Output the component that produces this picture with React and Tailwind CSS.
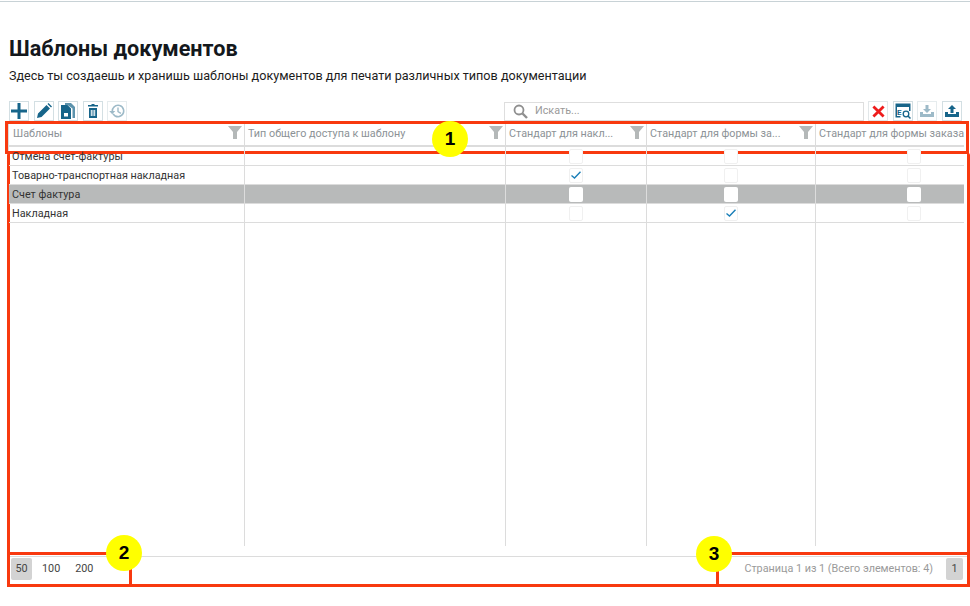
import React from 'react';

const columns = [
  { title: 'Шаблоны', width: 'w-[236px]', filter: true, first: true },
  { title: 'Тип общего доступа к шаблону', width: 'w-[261px]', filter: true },
  { title: 'Стандарт для накл...', width: 'w-[141px]', filter: true },
  { title: 'Стандарт для формы за...', width: 'w-[169px]', filter: true },
  { title: 'Стандарт для формы заказа', width: 'w-[195px]' },
];

const rows = [
  { name: 'Отмена счет-фактуры', checks: [false, false, false] },
  { name: 'Товарно-транспортная накладная', checks: [true, false, false] },
  { name: 'Счет фактура', checks: [false, false, false], selected: true },
  { name: 'Накладная', checks: [false, true, false] },
];

function Icon({ children, muted }) {
  return (
    <button className={`flex h-5 w-5 items-center justify-center border ${muted ? 'border-[#e6ecee] text-[#9dbac8]' : 'border-[#d3dfe3] text-[#17658a]'}`}>
      <svg width="18" height="18" viewBox="0 0 18 18" fill="currentColor">{children}</svg>
    </button>
  );
}

function Toolbar() {
  return (
    <div className="flex h-[20px] items-center pl-[9px]">
      <div className="flex gap-[4.5px]">
        <Icon><path d="M7.500 1h3v6.500H17v3h-6.500V17h-3v-6.500H1v-3h6.500z" /></Icon>
        <Icon><path d="M2 16l1-4.500L11.500 3 15 6.500 6.500 15zM12.500 2l1-1 3.500 3.500-1 1z" /></Icon>
        <Icon>
          <path d="M6 1h6l4 4v11h-2.500V6.500L8.500 3H6z" opacity=".7" />
          <path d="M2 3h6.500L12 6.500V17H2zM5 11v3.500h4V11z" fillRule="evenodd" />
        </Icon>
        <Icon><path d="M7.500 2h3v1h3.500v1.500H4V3h3.500zM5 6h8v10H5zM6.800 8v6h1V8zM8.500 8v6h1V8zM10.200 8v6h1V8z" fillRule="evenodd" /></Icon>
        <Icon muted>
          <path d="M10 2.500a6.500 6.500 0 1 1-5.600 9.800l1.400-.8A4.900 4.900 0 1 0 5.100 9H7.300L4.200 12.200 1.200 9h2.300A6.500 6.500 0 0 1 10 2.500zM9.300 5.500h1.400v3.700l2.600 1.500-.7 1.200-3.300-2z" />
        </Icon>
      </div>
      <div className="ml-[377px] flex h-[19px] w-[360px] items-center border border-[#dedede] pl-2">
        <svg width="15" height="15" viewBox="0 0 15 15" fill="none" stroke="#8f8f8f" strokeWidth="1.800">
          <circle cx="6" cy="6" r="4.500" />
          <path d="M9.500 9.500l4.500 4.500" strokeWidth="2.400" />
        </svg>
        <span className="ml-[7px] text-[10.800px] text-[#9a9a9a]">Искать...</span>
      </div>
      <div className="ml-[4px] flex gap-[4.500px]">
        <button className="flex h-5 w-5 items-center justify-center border border-[#e2e7e9]">
          <svg width="13" height="13" viewBox="0 0 14 14" stroke="#ee1c1c" strokeWidth="3"><path d="M1.500 1.500l11 11M12.500 1.500l-11 11" /></svg>
        </button>
        <Icon>
          <path d="M1.500 1.500h15v3.500h-15z" />
          <path d="M1.500 5h1.500v9.500h-1.500z M15 5h1.500v4H15z M1.500 14h5v1.500h-5z" />
          <text x="3" y="13" fontSize="8" fontWeight="700" fontFamily="Roboto, sans-serif">E</text>
          <circle cx="12" cy="12" r="2.800" fill="none" stroke="currentColor" strokeWidth="1.300" />
          <path d="M14 14l2.500 2.500" stroke="currentColor" strokeWidth="1.500" />
        </Icon>
        <Icon muted><path d="M7.500 3h3v4H13l-4 4-4-4h2.500zM2 10h3v2h8v-2h3v5H2z" /></Icon>
        <Icon><path d="M9 3l4 4h-2.500v4h-3V7H5zM2 10h3v2h8v-2h3v5H2z" /></Icon>
      </div>
    </div>
  );
}

function HeaderCell({ col, last }) {
  return (
    <div className={`relative flex h-[21px] shrink-0 items-center ${col.first ? 'pl-[4px]' : 'pl-[3px]'} ${col.width} ${last ? '' : 'border-r border-[#dcdcdc]'}`}>
      <span className="whitespace-nowrap text-[10.800px] text-[#8c9296]">{col.title}</span>
      {col.filter && (
        <svg className="absolute right-[2px] top-[2px]" width="14" height="13" viewBox="0 0 14 13" fill="#b4b8b8">
          <path d="M0 0h14L9 6v7H5V6z" />
        </svg>
      )}
    </div>
  );
}

function Checkbox({ checked, selected }) {
  return (
    <div className={`flex h-[15px] w-[14px] items-center justify-center rounded-[2px] ${selected ? 'bg-white' : 'border border-[#f0f0f0] bg-white'}`}>
      {checked && (
        <svg width="10" height="8" viewBox="0 0 10 8" fill="none" stroke="#1a7fb8" strokeWidth="1.400">
          <path d="M.5 4.500L3.500 7l6-6.300" />
        </svg>
      )}
    </div>
  );
}

function Row({ row }) {
  const bg = row.selected ? 'bg-[#b8baba]' : '';
  return (
    <div className={`flex h-[19px] border-b border-[#dcdcdc] ${bg}`}>
      <div className="flex w-[236px] shrink-0 items-center border-r border-[#dcdcdc] pl-[3px] pt-[2px] text-[10.800px] text-[#333333]">
        {row.name}
      </div>
      <div className="w-[261px] shrink-0 border-r border-[#dcdcdc]" />
      {row.checks.map((checked, i) => (
        <div
          key={i}
          className={`flex shrink-0 items-center justify-center ${i === 0 ? 'w-[141px] border-r border-[#dcdcdc]' : i === 1 ? 'w-[169px] border-r border-[#dcdcdc]' : 'w-[195px]'}`}
        >
          <Checkbox checked={checked} selected={row.selected} />
        </div>
      ))}
    </div>
  );
}

function Grid() {
  return (
    <div className="relative ml-[8px] mr-[6px] mt-[3px] flex h-[422px] flex-col overflow-hidden border-l border-[#dcdcdc]">
      <div className="flex border-b-2 border-[#dcdcdc]">
        {columns.map((col, i) => (
          <HeaderCell key={col.title} col={col} last={i === columns.length - 1} />
        ))}
      </div>
      <div className="relative flex-1">
        <div className="relative z-10 w-[1002px]">
          {rows.map((row) => <Row key={row.name} row={row} />)}
        </div>
        <div className="absolute inset-0 flex">
          <div className="w-[236px] shrink-0 border-r border-[#dcdcdc]" />
          <div className="w-[261px] shrink-0 border-r border-[#dcdcdc]" />
          <div className="w-[141px] shrink-0 border-r border-[#dcdcdc]" />
          <div className="w-[169px] shrink-0 border-r border-[#dcdcdc]" />
        </div>
      </div>
    </div>
  );
}

function Footer() {
  return (
    <div className="ml-[8px] mt-[10px] flex h-[30px] items-start justify-between border-t border-[#dcdcdc] pl-[3px] pr-[7px] pt-px text-[10.800px]">
      <div className="flex items-center text-[#444444]">
        <span className="flex h-[22px] w-[21px] items-center justify-center rounded-[2px] bg-[#d3d3d3]">50</span>
        <span className="ml-[10px]">100</span>
        <span className="ml-[15px]">200</span>
      </div>
      <div className="flex items-center">
        <span className="text-[#9a9a9a]">Страница 1 из 1 (Всего элементов: 4)</span>
        <span className="ml-[13px] flex h-[22px] w-[17px] items-center justify-center rounded-[2px] bg-[#d3d3d3] text-[#444444]">1</span>
      </div>
    </div>
  );
}

function Marker({ n, className }) {
  return (
    <div className={`absolute flex h-9 w-9 items-center justify-center rounded-full bg-[#ffff00] text-[19px] font-bold text-black ${className}`} style={{ fontFamily: 'Liberation Sans, sans-serif' }}>
      {n}
    </div>
  );
}

export default function App() {
  return (
    <div className="relative h-[606px] w-[970px] overflow-hidden bg-white" style={{ fontFamily: 'Roboto, sans-serif' }}>
      <div className="mt-px h-[1px] bg-[#c8d2d6]" />
      <div className="pl-[9px] pt-[34px]">
        <h1 className="text-[21.600px] font-bold leading-[26px] text-[#14181c]">Шаблоны документов</h1>
        <p className="mt-[5px] text-[12.600px] leading-[18px] text-[#1c1c1c]">
          Здесь ты создаешь и хранишь шаблоны документов для печати различных типов документации
        </p>
      </div>
      <div className="mt-[16px]">
        <Toolbar />
      </div>
      <Grid />
      <Footer />

      {/* annotations drawn on top of the screenshot */}
      <div className="absolute left-[7px] top-[153px] h-[434px] w-[963px] rounded-[2px] border-x-[3px] border-b-[3px] border-[#f8390f]" />
      <div className="absolute left-[5px] top-[121px] h-[33px] w-[964px] border-[3px] border-[#f8390f]" />
      <div className="absolute left-[7px] top-[552px] h-[35px] w-[125px] border-[3px] border-[#f8390f]" />
      <div className="absolute left-[716px] top-[552px] h-[35px] w-[254px] border-[3px] border-[#f8390f]" />
      <Marker n="1" className="left-[432px] top-[121px]" />
      <Marker n="2" className="left-[106px] top-[535px]" />
      <Marker n="3" className="left-[696px] top-[536px]" />
    </div>
  );
}
